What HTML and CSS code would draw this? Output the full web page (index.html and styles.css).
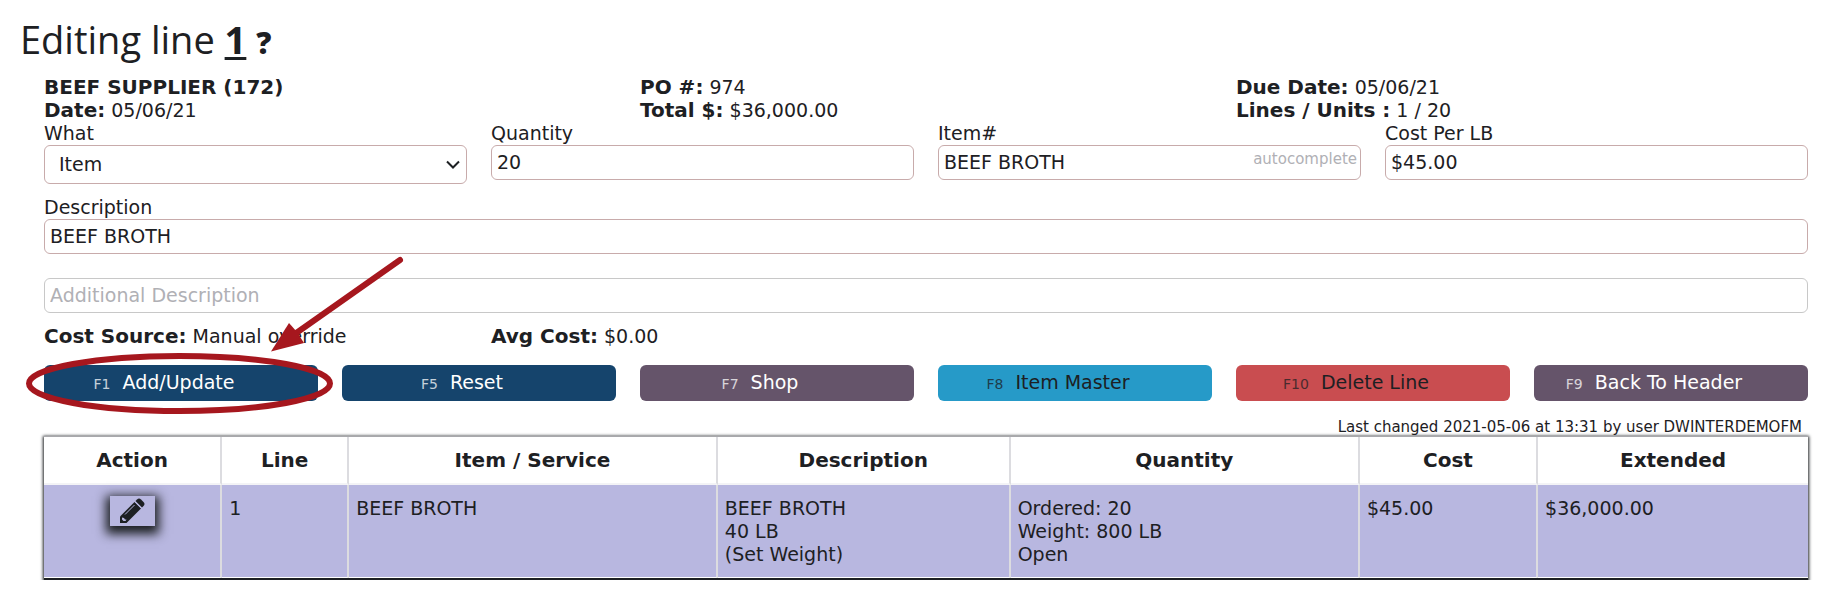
FILE: index.html
```
<!DOCTYPE html>
<html lang="en">

<head>
    <meta charset="UTF-8">
    <meta name="viewport" content="width=device-width, initial-scale=1.0">
    <title>Editing line 1</title>
    <link rel="stylesheet" href="styles.css">
</head>

<body>
    <h1>Editing line <b class="line-number">1</b> <span class="help">?</span></h1>

    <form class="container">
        <div class="row thirds">
            <div><b>BEEF SUPPLIER (172)</b><br><b>Date:</b> 05/06/21</div>
            <div><b>PO #:</b> 974<br><b>Total $:</b> $36,000.00</div>
            <div><b>Due Date:</b> 05/06/21<br><b>Lines / Units :</b> 1 / 20</div>
        </div>

        <div class="row quarters">
            <div>
                <label for="what">What</label>
                <div class="select-wrap">
                    <select id="what">
                        <option>Item</option>
                    </select>
                    <svg class="chevron" width="14" height="9" viewBox="0 0 14 9">
                        <path d="M1 1.5l6 6 6-6" fill="none" stroke="#1d2023" stroke-width="2" />
                    </svg>
                </div>
            </div>
            <div>
                <label for="quantity">Quantity</label>
                <input type="text" id="quantity" value="20">
            </div>
            <div class="autocomplete">
                <label for="item">Item#</label>
                <input type="text" id="item" value="BEEF BROTH">
                <span class="hint">autocomplete</span>
            </div>
            <div>
                <label for="cost">Cost Per LB</label>
                <input type="text" id="cost" value="$45.00">
            </div>
        </div>

        <div class="description">
            <label for="description">Description</label>
            <input type="text" id="description" value="BEEF BROTH">
        </div>
        <input type="text" class="additional" placeholder="Additional Description" aria-label="Additional Description">

        <div class="row quarters costs">
            <div><b>Cost Source:</b> Manual override</div>
            <div><b>Avg Cost:</b> $0.00</div>
        </div>

        <div class="row buttons">
            <button type="button" class="btn primary"><small>F1</small>Add/Update</button>
            <button type="button" class="btn primary"><small>F5</small>Reset</button>
            <button type="button" class="btn secondary"><small>F7</small>Shop</button>
            <button type="button" class="btn info"><small>F8</small>Item Master</button>
            <button type="button" class="btn danger"><small>F10</small>Delete Line</button>
            <button type="button" class="btn secondary"><small>F9</small>Back To Header</button>
        </div>

        <div class="last-changed">Last changed 2021-05-06 at 13:31 by user DWINTERDEMOFM</div>

        <div class="table-wrap">
            <table>
                <colgroup>
                    <col class="col-action">
                    <col class="col-line">
                    <col class="col-item">
                    <col class="col-description">
                    <col class="col-quantity">
                    <col class="col-cost">
                    <col>
                </colgroup>
                <thead>
                    <tr>
                        <th>Action</th>
                        <th>Line</th>
                        <th>Item / Service</th>
                        <th>Description</th>
                        <th>Quantity</th>
                        <th>Cost</th>
                        <th>Extended</th>
                    </tr>
                </thead>
                <tbody>
                    <tr>
                        <td class="action">
                            <button type="button" class="edit" aria-label="Edit line">
                                <svg width="26" height="26" viewBox="0 0 26 26">
                                    <path d="M18 1.500q2-2 4 0l2.500 2.500q2 2 0 4l-1.500 1.500-6.500-6.500z" fill="#1d2023" />
                                    <path d="M15.500 4l6.500 6.500L7.500 25H1v-6.500z" fill="#1d2023" />
                                    <path d="M15.500 3.500l6.500 6.500" stroke="#b8b7e0" stroke-width="1" />
                                    <path d="M3 19.500v2l1.500 1.500H6.500L7.500 21.500 6 21.500 5 20z" fill="#b8b7e0" />
                                    <path d="M6 16.500l9.500-9.500" stroke="#b8b7e0" stroke-width="1" />
                                </svg>
                            </button>
                        </td>
                        <td>1</td>
                        <td>BEEF BROTH</td>
                        <td>BEEF BROTH<br>40 LB<br>(Set Weight)</td>
                        <td>Ordered: 20<br>Weight: 800 LB<br>Open</td>
                        <td>$45.00</td>
                        <td>$36,000.00</td>
                    </tr>
                </tbody>
            </table>
        </div>
    </form>

    <!-- arrow and ring around Add/Update -->
    <svg class="callout" width="420" height="420" viewBox="0 0 420 420">
        <ellipse cx="179.500" cy="383.500" rx="150.500" ry="27.500" fill="none" stroke="#a6171e" stroke-width="6" />
        <path d="M400 260L292 336" stroke="#a6171e" stroke-width="6" stroke-linecap="round" />
        <path d="M271 351.500L289 323l8 9 7 11z" fill="#a6171e" />
    </svg>
</body>

</html>
```
FILE: styles.css
```
* {
    box-sizing: border-box;
}

body {
    position: relative;
    margin: 0;
    background-color: #fff;
    color: #1d2023;
    font-family: Verdana, "DejaVu Sans", sans-serif;
    font-size: 19px;
    line-height: 23px;
}

b,
th {
    font-size: 20px;
}

h1 {
    margin: 0;
    padding: 13px 20px 7px;
    font-family: "Segoe UI", "Open Sans", sans-serif;
    font-size: 38px;
    font-weight: 400;
    line-height: 52px;
}

.line-number {
    font-size: 38px;
    font-weight: 700;
    text-decoration: underline;
    text-decoration-thickness: 3px;
    text-underline-offset: 3px;
}

.help {
    font-size: 30px;
    font-weight: 800;
}

.container {
    padding: 0 36px 0 44px;
}

.row {
    display: grid;
    column-gap: 24px;
    align-items: start;
}

.thirds {
    grid-template-columns: repeat(3, 1fr);
}

.quarters {
    grid-template-columns: repeat(4, 1fr);
}

label {
    display: block;
}

input,
select {
    display: block;
    width: 100%;
    height: 35px;
    padding: 0 5px 1px;
    border: 1px solid #c8abab;
    border-radius: 6px;
    background-color: #fff;
    color: #1d2023;
    font: inherit;
}

.select-wrap,
.autocomplete {
    position: relative;
}

select {
    height: 39px;
    padding: 0 14px;
    appearance: none;
}

.chevron {
    position: absolute;
    top: 15px;
    right: 7px;
    pointer-events: none;
}

.hint {
    position: absolute;
    top: 26px;
    right: 4px;
    color: #b0b0b5;
    font-size: 15px;
}

.description {
    margin: 12px 0 24px;
}

.additional {
    border-color: #c8c8c8;
}

.additional::placeholder {
    color: #b0b0b5;
}

.costs {
    margin: 12px 0 17px;
}

.buttons {
    grid-template-columns: repeat(6, 1fr);
}

.btn {
    height: 36px;
    padding: 0 34px 0 0;
    border: none;
    border-radius: 6px;
    color: #fff;
    font: inherit;
    white-space: nowrap;
    cursor: pointer;
}

.btn small {
    margin-right: 12px;
    font-size: 14px;
    opacity: 0.75;
}

.primary {
    background-color: #15446c;
}

.secondary {
    background-color: #65546a;
}

.info {
    background-color: #269ac8;
    color: #1d2023;
}

.danger {
    background-color: #c94d50;
    color: #1d2023;
}

.last-changed {
    padding: 18px 6px 0 0;
    font-size: 15px;
    line-height: 17px;
    text-align: right;
}

.table-wrap {
    border-top: 1px solid #a8a8ac;
    border-bottom: 2px solid #1d2023;
    background-color: #fff;
    box-shadow: 0 1px 3px 1px #1d2023;
}

table {
    width: 100%;
    table-layout: fixed;
    border-collapse: separate;
    border-spacing: 0;
}

th,
td {
    padding: 12px 7px 11px;
    border-right: 2px solid #dcdce0;
}

th:last-child,
td:last-child {
    border-right: none;
}

th {
    border-bottom: 2px solid #f3f3f6;
    background-color: #fff;
}

td {
    border-bottom: 1px solid #fff;
    background-color: #b8b7e0;
    vertical-align: top;
}

.col-action {
    width: 10.1%;
}

.col-line {
    width: 7.2%;
}

.col-item {
    width: 20.9%;
}

.col-description {
    width: 16.6%;
}

.col-quantity {
    width: 19.8%;
}

.col-cost {
    width: 10.1%;
}

.action {
    padding-top: 11px;
    text-align: center;
}

.edit {
    display: inline-flex;
    align-items: center;
    justify-content: center;
    width: 45px;
    height: 30px;
    padding: 0;
    border: none;
    background-color: #b8b7e0;
    box-shadow: 0 4px 10px 4px #1d2023;
    cursor: pointer;
}

.callout {
    position: absolute;
    top: 0;
    left: 0;
    pointer-events: none;
}
```
